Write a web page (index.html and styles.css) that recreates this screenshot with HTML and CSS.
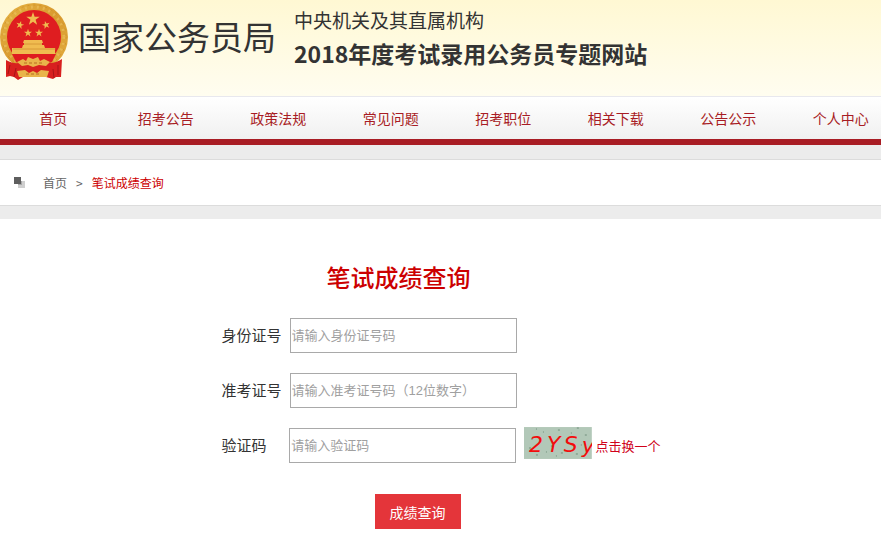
FILE: index.html
```
<!DOCTYPE html>
<html lang="zh-CN">
  <head>
    <meta charset="UTF-8" />
    <meta name="viewport" content="width=device-width, initial-scale=1.0" />
    <title>笔试成绩查询 - 国家公务员局</title>
    <link rel="stylesheet" href="styles.css" />
  </head>
  <body>
    <header class="header">
      <svg class="emblem" viewBox="0 0 70 78" aria-hidden="true">
        <defs>
          <linearGradient id="gold" x1="0" y1="0" x2="1" y2="1">
            <stop offset="0" stop-color="#e6b445" />
            <stop offset="0.5" stop-color="#d99a2e" />
            <stop offset="1" stop-color="#e3ae40" />
          </linearGradient>
          <path id="star" d="M0-7 1.6-2.2 6.7-2.2 2.6.8 4.1 5.7 0 2.7-4.1 5.7-2.6.8-6.7-2.2-1.6-2.2Z" />
        </defs>
        <!-- wreath and disc -->
        <circle cx="34" cy="34" r="34" fill="url(#gold)" />
        <circle cx="34" cy="34" r="30" fill="none" stroke="#f2cc6c" stroke-width="3" stroke-dasharray="2 4" opacity="0.45" />
        <circle cx="34" cy="34" r="32" fill="none" stroke="#bb7a20" stroke-dasharray="2 4" opacity="0.4" />
        <circle cx="34" cy="34" r="27" fill="#df1d20" />
        <!-- ribbons -->
        <path fill="#d8201f" d="M6 57q8 4 12 3h32q6 0 12-4l-1 18-5 0-3 2-7-2H23l-5 3-4-3-4-1-4 1Z" />
        <path fill="none" stroke="#a81518" d="M10 62l-2 9M16 65l-2 9M53 66l1 9M58 62l0 10" />
        <g fill="#f0bc50">
          <use href="#star" transform="translate(33 16)" />
          <use href="#star" transform="translate(20 22) scale(.6) rotate(15)" />
          <use href="#star" transform="translate(46 22) scale(.6) rotate(-15)" />
          <use href="#star" transform="translate(28 30) scale(.6)" />
          <use href="#star" transform="translate(39 30) scale(.6)" />
          <!-- gate tower -->
          <path d="M24 37h18l1 3h-1v2h2l1 3h10v6H12v-6h10l1-3h1v-2h-1Z" />
        </g>
        <path fill="none" stroke="#c98429" opacity="0.6" d="M24 41h18M13 46h43" />
        <path fill="#df1d20" d="M12 51h44l-4 8q-18 8-36 0Z" />
        <!-- cog wheel and knot -->
        <path fill="#e9b54a" d="M17 59l6-3 3 2 2-4 5 2 5-2 2 4 4-2 6 3-4 4-7-1-6 2-5-2-6 1Z" />
        <path fill="#e9b54a" d="M17 68l8-1 4 3 4-2 4 2 4-3 8 1-2 6H19Z" />
        <path fill="none" stroke="#b96d20" d="M24 60h19M26 71h15" stroke-dasharray="3 2" />
      </svg>
      <div class="bureau">国家公务员局</div>
      <div class="site-title">
        <p>中央机关及其直属机构</p>
        <h1>2018年度考试录用公务员专题网站</h1>
      </div>
    </header>

    <nav class="nav">
      <ul>
        <li><a href="#">首页</a></li>
        <li><a href="#">招考公告</a></li>
        <li><a href="#">政策法规</a></li>
        <li><a href="#">常见问题</a></li>
        <li><a href="#">招考职位</a></li>
        <li><a href="#">相关下载</a></li>
        <li><a href="#">公告公示</a></li>
        <li><a href="#">个人中心</a></li>
      </ul>
    </nav>

    <div class="crumb-band">
      <div class="crumbs">
        <svg class="crumb-icon" viewBox="0 0 11 11" aria-hidden="true">
          <path fill="#cfcfcf" d="M4 4h7v7H4Z" />
          <path fill="#a8a8a8" d="M4 4h4v4H4Z" />
          <path fill="#5e5e5e" d="M0 0h7v7H0Z" />
        </svg>
        <a href="#">首页</a>
        <span class="sep">&gt;</span>
        <a href="#" class="current">笔试成绩查询</a>
      </div>
    </div>

    <main>
      <form class="query-form">
        <h2>笔试成绩查询</h2>
        <div class="row">
          <label for="idCard">身份证号</label>
          <input type="text" id="idCard" placeholder="请输入身份证号码" />
        </div>
        <div class="row">
          <label for="ticket">准考证号</label>
          <input type="text" id="ticket" placeholder="请输入准考证号码（12位数字）" />
        </div>
        <div class="row">
          <label for="code">验证码</label>
          <input type="text" id="code" placeholder="请输入验证码" />
          <svg class="captcha" viewBox="0 0 68 32" role="img" aria-label="验证码">
            <rect width="68" height="32" fill="#b2c8b8" />
            <path
              stroke="#70907c"
              d="M12 2h1M34 3h2M53 1h2M25 10h2M7 12h2M42 13h2M5 21h2M27 19h2M37 26h2M52 27h2M12 28h2M61 8h2M19 5h1M47 6h1M32 29h1M22 25h1M57 18h1"
            />
            <g class="captcha-text">
              <text x="5" y="25">2</text>
              <text x="23" y="25">Y</text>
              <text x="40" y="25">S</text>
              <text x="58" y="26">y</text>
            </g>
          </svg>
          <a href="#" class="refresh">点击换一个</a>
        </div>
        <button type="submit">成绩查询</button>
      </form>
    </main>
  </body>
</html>
```

FILE: styles.css
```
:root {
  --red: #c00;
  --nav-red: #a81c24;
  --line: #dcdcdc;
}

* {
  box-sizing: border-box;
  margin: 0;
  padding: 0;
}

body {
  background: #fff;
  color: #333;
  font-family: "Noto Sans CJK SC", sans-serif;
  font-size: 14px;
}

a {
  text-decoration: none;
}

.header {
  display: flex;
  height: 96px;
  background: linear-gradient(#fff8d3, #fffdf0);
}

.emblem {
  width: 70px;
  height: 78px;
  margin-top: 3px;
  flex: none;
}

.bureau {
  margin-left: 8px;
  font-size: 33px;
  line-height: 72px;
  white-space: nowrap;
}

.site-title {
  margin-left: 18px;
  padding-top: 6px;
  white-space: nowrap;
}

.site-title p {
  font-size: 19px;
  line-height: 28px;
}

.site-title h1 {
  font-size: 23px;
  line-height: 38px;
}

.nav {
  overflow: hidden;
  border-top: 1px solid #e8e8ee;
  border-bottom: 6px solid var(--nav-red);
  background: linear-gradient(#fff, #f0f0f0);
}

.nav ul {
  display: grid;
  grid-template-columns: repeat(8, 1fr);
  margin: 0 -16px 0 -3px;
  list-style: none;
}

.nav a {
  display: block;
  line-height: 42px;
  text-align: center;
  color: var(--nav-red);
}

.crumb-band {
  padding: 14px 0 13px;
  background: #ececec;
}

.crumbs {
  display: flex;
  align-items: center;
  height: 47px;
  padding-left: 14px;
  border-top: 1px solid var(--line);
  border-bottom: 1px solid var(--line);
  background: #fff;
  font-size: 12px;
}

.crumbs a {
  color: #666;
}

.crumbs .current {
  color: var(--red);
}

.crumb-icon {
  width: 11px;
  height: 11px;
  margin-right: 18px;
}

.sep {
  margin: 0 9px;
  font-size: 12px;
  color: #666;
}

.query-form {
  width: 440px;
  margin: 0 auto;
  padding-top: 38px;
}

.query-form h2 {
  margin-bottom: 21px;
  padding-right: 84px;
  font-size: 24px;
  font-weight: 500;
  line-height: 40px;
  text-align: center;
  color: var(--red);
}

.row {
  display: flex;
  align-items: center;
  height: 35px;
  margin-bottom: 20px;
}

.row label {
  width: 69px;
  padding: 0 0 3px 1px;
  font-size: 15px;
}

.row input {
  width: 227px;
  height: 35px;
  padding: 0 1px;
  border: 1px solid #a9a9a9;
  font-family: "Liberation Sans", "Noto Sans CJK SC", sans-serif;
  font-size: 13px;
}

.row input::placeholder {
  color: #a0a0a0;
}

.captcha {
  width: 68px;
  height: 32px;
  margin: 0 4px 6px 8px;
}

.captcha-text {
  fill: #f20d0d;
  font-family: "DejaVu Sans", sans-serif;
  font-size: 22px;
  font-style: italic;
}

.refresh {
  font-size: 13px;
  color: #d0021b;
  white-space: nowrap;
}

.query-form button {
  display: block;
  width: 86px;
  height: 35px;
  margin: 31px 0 0 154px;
  border: none;
  background: #e4353a;
  color: #fff;
  font-family: inherit;
  font-size: 14px;
  cursor: pointer;
}
```
